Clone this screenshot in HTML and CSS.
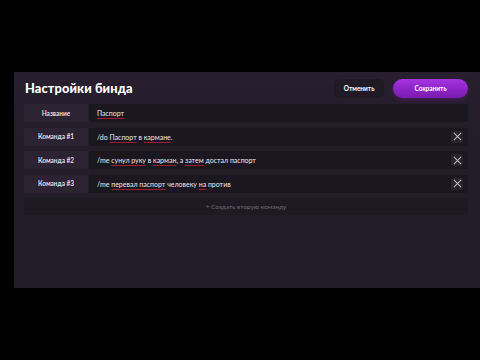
FILE: index.html
```html
<!DOCTYPE html>
<html lang="ru">
<head>
<meta charset="utf-8">
<link rel="stylesheet" href="styles.css">
</head>
<body>
<div class="panel">
  <div class="header">
    <h1 class="title">Настройки бинда</h1>
    <div class="actions">
      <button class="btn btn-cancel">Отменить</button>
      <button class="btn btn-save">Сохранить</button>
    </div>
  </div>
  <div class="rows">
    <div class="row">
      <div class="label">Название</div>
      <div class="field"><span class="err">Паспорт</span></div>
    </div>
    <div class="row">
      <div class="label">Команда #1</div>
      <div class="field">/do <span class="err">Паспорт</span> в <span class="err">кармане</span>.</div>
      <span class="del"><svg viewBox="0 0 10 10" width="9" height="9"><path d="M1 1L9 9M9 1L1 9" stroke="#b9b6bd" stroke-width="1.2" fill="none"/></svg></span>
    </div>
    <div class="row">
      <div class="label">Команда #2</div>
      <div class="field">/me <span class="err">сунул руку</span> в <span class="err">карман</span>, а <span class="err">затем</span> достал паспорт</div>
      <span class="del"><svg viewBox="0 0 10 10" width="9" height="9"><path d="M1 1L9 9M9 1L1 9" stroke="#b9b6bd" stroke-width="1.2" fill="none"/></svg></span>
    </div>
    <div class="row">
      <div class="label">Команда #3</div>
      <div class="field">/me <span class="err">перевал паспорт</span> человеку <span class="err">на</span> против</div>
      <span class="del"><svg viewBox="0 0 10 10" width="9" height="9"><path d="M1 1L9 9M9 1L1 9" stroke="#b9b6bd" stroke-width="1.2" fill="none"/></svg></span>
    </div>
    <div class="add">+ Создать вторую команду</div>
  </div>
</div>
</body>
</html>
```

FILE: styles.css
```css
* { box-sizing: border-box; }
html, body { margin: 0; padding: 0; }
body {
  width: 480px;
  height: 360px;
  background: #000;
  font-family: "Lato", "Noto Sans", sans-serif;
  overflow: hidden;
}
.panel {
  margin: 72px 0 0 14px;
  width: 466px;
  height: 216px;
  padding: 6px 12px 0 10px;
  background: linear-gradient(180deg, #291f2f 0%, #231d29 30%, #221d28 100%);
}
.header {
  display: flex;
  align-items: center;
  justify-content: space-between;
  height: 20px;
}
.title {
  margin: 0 0 0 1px;
  color: #fff;
  font-size: 12.8px;
  font-weight: 900;
  letter-spacing: 0.1px;
}
.actions {
  display: flex;
  gap: 9px;
  align-items: center;
}
.btn {
  border: 0;
  font-family: inherit;
  font-size: 6.5px;
  font-weight: 700;
  color: #fff;
  height: 19px;
  padding: 0;
}
.btn-cancel {
  width: 50px;
  background: #201a25;
  border-radius: 5px;
}
.btn-save {
  width: 75px;
  border-radius: 10px;
  background: linear-gradient(180deg, #a535e0 0%, #8a22c4 60%, #7b1cb0 100%);
  box-shadow: 0 2px 4px rgba(120, 30, 170, 0.35);
}
.rows {
  margin-top: 6px;
  display: flex;
  flex-direction: column;
  gap: 5.5px;
  width: 444px;
}
.row {
  position: relative;
  display: flex;
  height: 18px;
  gap: 1px;
}
.label {
  width: 64px;
  flex: none;
  display: flex;
  align-items: center;
  justify-content: center;
  background: #2b2232;
  color: #e2dee6;
  font-size: 6.5px;
  font-weight: 700;
}
.field {
  flex: 1;
  display: flex;
  align-items: center;
  white-space: pre;
  padding-left: 8px;
  background: #1b1720;
  color: #ece9ef;
  font-size: 7px;
}
.err {
  text-decoration: underline;
  text-decoration-color: #a51e30;
  text-underline-offset: 1.5px;
  text-decoration-thickness: 1.2px;
}
.del {
  position: absolute;
  right: 5px;
  top: 3px;
  width: 12px;
  height: 12px;
  display: flex;
  align-items: center;
  justify-content: center;
  background: #28232d;
  border-radius: 2px;
}
.add {
  height: 17px;
  display: flex;
  align-items: center;
  justify-content: center;
  background: #1e1a23;
  color: #6f6a75;
  font-size: 6.5px;
}
```
